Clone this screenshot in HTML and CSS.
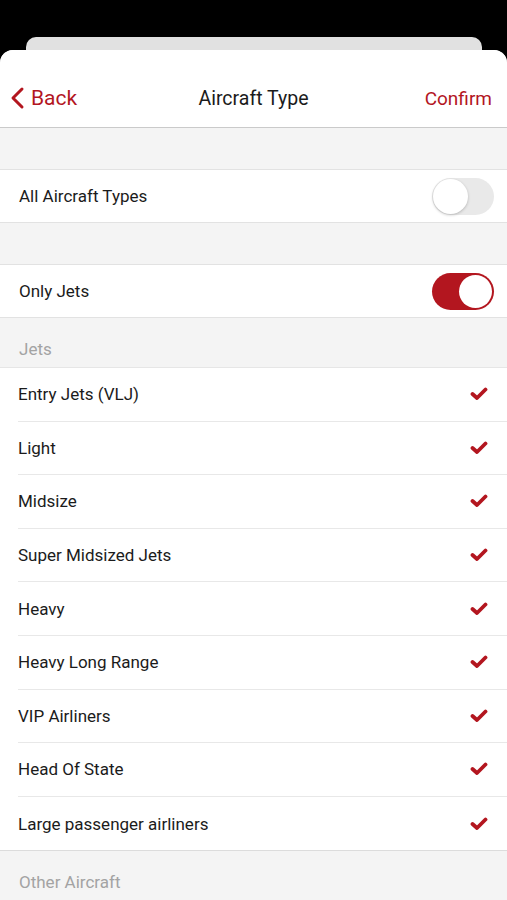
FILE: index.html
```html
<!DOCTYPE html>
<html lang="en">
<head>
  <meta charset="UTF-8">
  <title>Aircraft Type</title>
  <meta name="viewport" content="width=device-width, initial-scale=1.0">
  <link rel="stylesheet" href="styles.css">
</head>
<body>
  <div class="card-behind"></div>

  <div class="sheet">
    <header class="navbar">
      <a class="nav-back">
        <svg width="15" height="24" viewBox="0 0 15 24"><polyline points="12,3 3,12 12,21" fill="none" stroke="#b3161f" stroke-width="3" stroke-linecap="round" stroke-linejoin="round"/></svg>
        Back
      </a>
      <div class="nav-title">Aircraft Type</div>
      <a class="nav-confirm">Confirm</a>
    </header>

    <div class="spacer"></div>

    <div class="row switch-row">
      <span>All Aircraft Types</span>
      <span class="toggle"><span class="knob"></span></span>
    </div>

    <div class="spacer"></div>

    <div class="row switch-row">
      <span>Only Jets</span>
      <span class="toggle on"><span class="knob"></span></span>
    </div>

    <div class="section-head">Jets</div>

    <ul class="list">
      <li>Entry Jets (VLJ)</li>
      <li>Light</li>
      <li>Midsize</li>
      <li>Super Midsized Jets</li>
      <li>Heavy</li>
      <li>Heavy Long Range</li>
      <li>VIP Airliners</li>
      <li>Head Of State</li>
      <li>Large passenger airliners</li>
    </ul>

    <div class="section-head">Other Aircraft</div>
  </div>

  <script>
    // add the check marks to every selected row
    document.querySelectorAll(".list li").forEach(li => {
      li.insertAdjacentHTML("beforeend",
        '<svg class="check" width="18" height="14" viewBox="0 0 18 14"><polyline points="2.5,7 7,11 15.5,2.5" fill="none" stroke="#b3161f" stroke-width="3.8" stroke-linecap="round" stroke-linejoin="round"/></svg>');
    });
  </script>
</body>
</html>
```

FILE: styles.css
```css
body {
  margin: 0;
  background: #000;
  font-family: Roboto, "Noto Sans", sans-serif;
  color: #1b1b1b;
  height: 900px;
  overflow: hidden;
}

.card-behind {
  margin: 37px 25px 0 26px;
  height: 13px;
  background: #e1e1e1;
  border-radius: 10px 10px 0 0;
}

.sheet {
  background: #f4f4f4;
  border-radius: 13px 13px 0 0;
  overflow: hidden;
  height: 850px;
}

.navbar {
  display: flex;
  align-items: center;
  justify-content: space-between;
  height: 78px;
  padding: 19px 15px 0 10px;
  box-sizing: border-box;
  background: #fff;
  border-bottom: 1px solid #cacaca;
  position: relative;
}

.nav-back,
.nav-confirm {
  color: #b3161f;
}

.nav-back {
  display: flex;
  align-items: center;
  gap: 6px;
  font-size: 21px;
}

.nav-confirm {
  font-size: 19px;
}

.nav-title {
  position: absolute;
  left: 0;
  right: 0;
  top: 19px;
  bottom: 0;
  display: flex;
  align-items: center;
  justify-content: center;
  font-size: 19.5px;
  pointer-events: none;
}

.spacer {
  height: 41px;
}

.row {
  display: flex;
  align-items: center;
  justify-content: space-between;
  background: #fff;
  border-top: 1px solid #e2e2e2;
  border-bottom: 1px solid #e2e2e2;
  height: 54px;
  box-sizing: border-box;
  padding: 0 13px 0 19px;
  font-size: 17px;
}

.toggle {
  width: 62px;
  height: 37px;
  border-radius: 19px;
  background: #e9e9e9;
  position: relative;
}

.toggle .knob {
  position: absolute;
  top: 1px;
  left: 1px;
  width: 35px;
  height: 35px;
  border-radius: 50%;
  background: #fff;
  box-shadow: 0 1px 3px rgba(0, 0, 0, 0.22);
}

.toggle.on {
  background: #b3161f;
}

.toggle.on .knob {
  left: auto;
  right: 2px;
  top: 2px;
  width: 33px;
  height: 33px;
  box-shadow: none;
}

.section-head {
  height: 50px;
  box-sizing: border-box;
  padding: 21px 0 0 19px;
  color: #a3a3a3;
  font-size: 17px;
  border-bottom: 1px solid #e6e6e6;
}

.list {
  list-style: none;
  margin: 0;
  padding: 0 0 0 18px;
  background: #fff;
  border-bottom: 1px solid #dcdcdc;
}

.list li {
  display: flex;
  align-items: center;
  justify-content: space-between;
  height: 53.6px;
  box-sizing: border-box;
  padding-right: 19px;
  border-bottom: 1px solid #e8e8e8;
  font-size: 17px;
}

.list li:last-child {
  border-bottom: none;
}

.list + .section-head {
  border-bottom: none;
}
```
